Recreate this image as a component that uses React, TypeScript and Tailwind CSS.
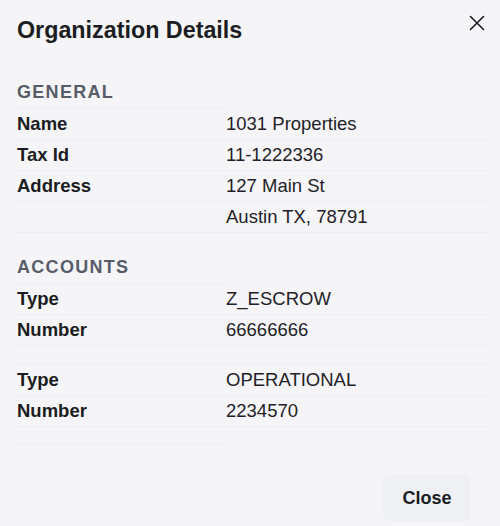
import React from "react";

const line = "border-b border-[#eeeef2]";

function Row({ label, value, border = true }: { label: string; value: string; border?: boolean }) {
  return (
    <div className={`grid grid-cols-[209px_1fr] h-[31px] items-center ${border ? line : ""}`}>
      <div className="font-bold text-[18.5px] text-[#1b1d22]">{label}</div>
      <div className="text-[18.5px] text-[#1f2127]">{value}</div>
    </div>
  );
}

function SectionHeader({ title }: { title: string }) {
  return (
    <div className={`w-[205px] h-[32px] flex items-center ${line}`}>
      <span className="font-bold text-[18px] tracking-[1.3px] text-[#585c69]">{title}</span>
    </div>
  );
}

export default function App() {
  return (
    <div
      className="w-[500px] h-[526px] bg-[#f5f5f7] relative overflow-hidden"
      style={{ fontFamily: '"Liberation Sans", Arial, sans-serif' }}
    >
      <div className="flex items-start justify-between pl-[17px] pr-[12px] pt-[15px]">
        <h1 className="font-bold text-[23.3px] leading-[30px] text-[#1b1d22]">Organization Details</h1>
        <button className="w-[16px] h-[16px] mt-[0px] mr-[3px] flex items-center justify-center text-[#1b1d22]">
          <svg width="16" height="16" viewBox="0 0 16 16" fill="none" stroke="currentColor" strokeWidth="1.6" strokeLinecap="round">
            <path d="M1.5 1.5 L14.5 14.5 M14.5 1.5 L1.5 14.5" />
          </svg>
        </button>
      </div>

      <div className="px-[17px] mt-[32px] pr-[12px]">
        <SectionHeader title="GENERAL" />
        <Row label="Name" value="1031 Properties" />
        <Row label="Tax Id" value="11-1222336" />
        <Row label="Address" value="127 Main St" />
        <Row label="" value="Austin TX, 78791" />

        <div className="h-[19px]" />
        <SectionHeader title="ACCOUNTS" />
        <Row label="Type" value="Z_ESCROW" />
        <Row label="Number" value="66666666" />
        <div className={`h-[19px] ${line}`} />
        <Row label="Type" value="OPERATIONAL" />
        <Row label="Number" value="2234570" />
        <div className={`w-[205px] h-[18px] ${line}`} />
      </div>

      <div className="flex justify-end pr-[29px] mt-[30px]">
        <button className="w-[88px] h-[46px] rounded-[6px] bg-[#eef0f4] font-bold text-[18px] text-[#1b1d22]">
          Close
        </button>
      </div>
    </div>
  );
}
